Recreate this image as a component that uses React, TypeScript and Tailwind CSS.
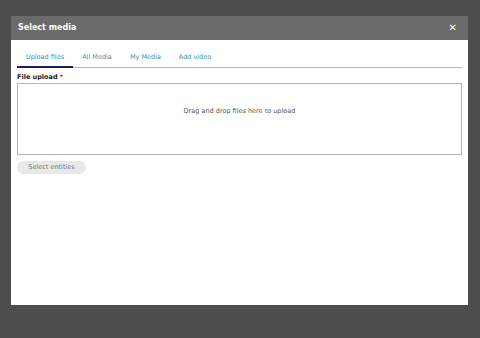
export default function App() {
  const tabs = ["Upload files", "All Media", "My Media", "Add video"];

  return (
    <div
      className="h-[338px] w-[480px] overflow-hidden bg-[#4d4d4d] pt-4 pl-[11px] text-[#222]"
      style={{ fontFamily: '"DejaVu Sans", Verdana, sans-serif' }}
    >
      <div className="flex h-[289px] w-[457px] flex-col bg-white">
        <div className="flex h-6 items-center justify-between bg-[#6b6b6b] pl-[7px] pr-[11px]">
          <span className="text-[8px] font-bold text-white">Select media</span>
          <span className="text-[10px] font-bold leading-none text-white">✕</span>
        </div>

        <div className="flex flex-col px-[6px]">
          <div className="mt-[9px] flex h-[19px] w-[445px] border-b border-[#b8b8b8] text-[6.5px] text-[#3b8db3]">
            {tabs.map((t, i) => (
              <div
                key={t}
                className={
                  i === 0
                    ? "-mb-px flex w-[56px] items-center justify-center border-b-2 border-[#1b1b6f]"
                    : i === 1
                      ? "flex w-[48px] items-center justify-center"
                      : i === 2
                        ? "flex w-[49px] items-center justify-center"
                        : "flex w-[50px] items-center justify-center"
                }
              >
                {t}
              </div>
            ))}
          </div>

          <div className="mt-[5px] text-[6.5px] font-bold leading-[9px]">
            File upload <span className="text-[#d72222]">*</span>
          </div>

          <div className="mt-[1px] flex h-[72px] w-[445px] justify-center border border-[#b3b3b3] pt-[23px] text-[6.5px] text-[#555]">
            Drag and drop files here to upload
          </div>

          <div className="mt-[6px] flex">
            <button
              type="button"
              className="h-[13px] w-[69px] rounded-full bg-[#e8e8e8] text-[6.5px] leading-none text-[#777]"
            >
              Select entities
            </button>
          </div>
        </div>
      </div>
    </div>
  );
}
